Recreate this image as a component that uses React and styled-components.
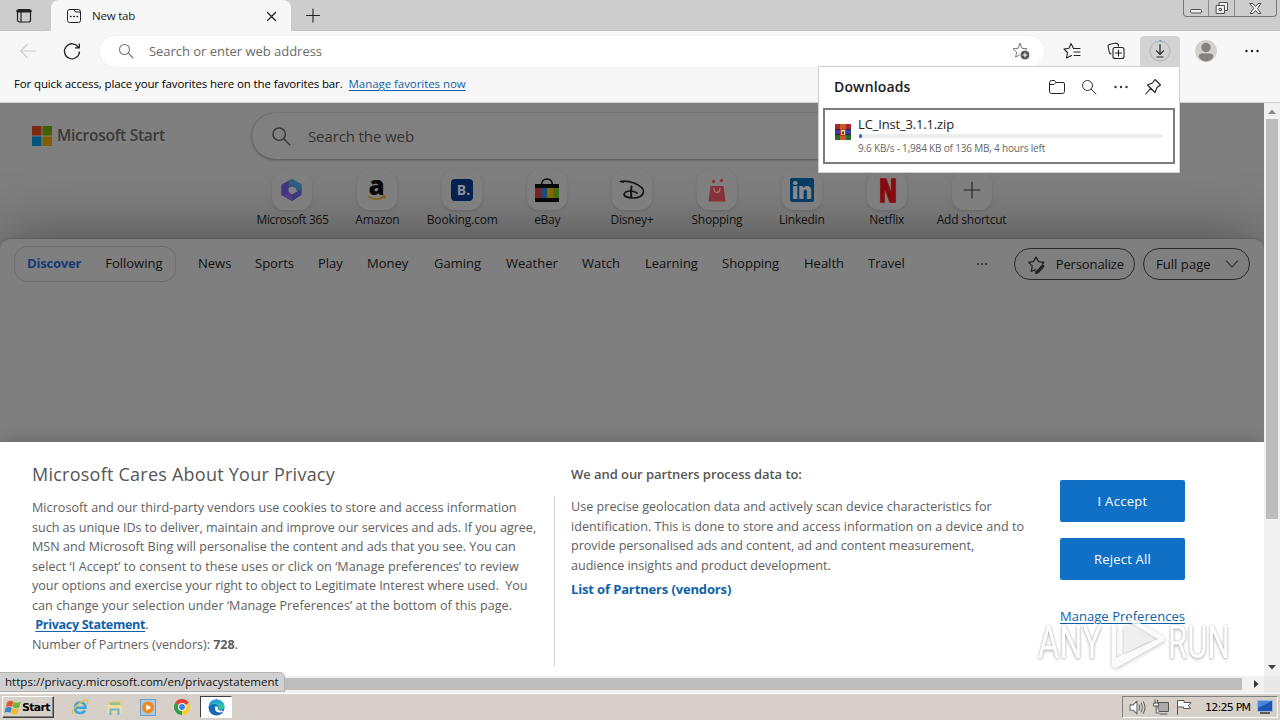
import React from 'react';
import styled, { createGlobalStyle } from 'styled-components';

const GlobalStyle = createGlobalStyle`
  * {
    box-sizing: border-box;
  }

  body {
    margin: 0;
    overflow: hidden;
    font-family: 'Open Sans', 'Noto Sans', sans-serif;
    background: #fff;
  }

  svg {
    display: block;
    flex: none;
    overflow: visible;
  }
`;

const Screen = styled.div`
  position: relative;
  display: flex;
  flex-direction: column;
  width: 1280px;
  height: 720px;
  overflow: hidden;
`;

const Text = styled.span`
  font-size: ${(p) => p.$size || 12}px;
  font-weight: ${(p) => p.$weight || 400};
  letter-spacing: ${(p) => p.$track || 0}px;
  line-height: 1;
  color: ${(p) => p.$color || '#1b1b1b'};
  white-space: pre;
`;

const LinkText = styled(Text)`
  color: ${(p) => p.$color || '#0f62a8'};
  text-decoration: underline;
  text-underline-offset: 2px;
  text-decoration-thickness: 1px;
`;

/* ---------- tab strip ---------- */

const TabStrip = styled.div`
  display: flex;
  height: 31px;
  background: #cdcdcd;
`;

const TabActions = styled.div`
  width: 51px;
  padding: 8px 0 0 16px;
  border-bottom: 1px solid #bdbdbd;
  border-bottom-right-radius: 7px;
`;

const Tab = styled.div`
  display: flex;
  align-items: center;
  width: 240px;
  padding: 1px 14px 0 15px;
  background: #f7f7f7;
  border-radius: 8px 8px 0 0;
`;

const TabTitle = styled(Text)`
  flex: 1;
  margin-left: 10px;
`;

const StripRest = styled.div`
  display: flex;
  flex: 1;
  justify-content: space-between;
  padding: 0 3px 0 14px;
  border-bottom: 1px solid #bdbdbd;
  border-bottom-left-radius: 7px;
`;

const NewTab = styled.div`
  padding-top: 8px;
`;

const WindowButtons = styled.div`
  display: flex;
  height: 17px;
  border: 1px solid #777;
  border-top: 0;
  border-radius: 0 0 4px 4px;
`;

const WindowButton = styled.div`
  display: flex;
  align-items: center;
  justify-content: center;
  width: ${(p) => p.$width}px;

  & + & {
    border-left: 1px solid #8a8a8a;
  }
`;

/* ---------- toolbar ---------- */

const Toolbar = styled.div`
  display: flex;
  align-items: center;
  height: 40px;
  padding: 0 18px 0 19px;
  background: #f7f7f7;
`;

const AddressBar = styled.div`
  display: flex;
  align-items: center;
  width: 944px;
  height: 31px;
  margin-left: 19px;
  padding: 0 14px 0 18px;
  border-radius: 16px;
  background: #fff;
  box-shadow: 0 0 2px #e4e4e4;
`;

const AddressText = styled(Text)`
  flex: 1;
  margin-left: 15px;
`;

const ToolButtons = styled.div`
  display: grid;
  grid-template-columns: 44px 33px 55px 49px 16px;
  align-items: center;
  margin-left: 19px;
`;

const DownloadButton = styled.div`
  display: flex;
  align-items: center;
  justify-content: center;
  width: 40px;
  height: 31px;
  border-radius: 4px 4px 0 0;
  background: #d3d3d3;
`;

const FavoritesBar = styled.div`
  display: flex;
  height: 32px;
  gap: 6px;
  padding: 7px 0 0 14px;
  background: #f7f7f7;
  border-bottom: 1px solid #cfcfcf;
`;

/* ---------- page ---------- */

const Viewport = styled.div`
  display: grid;
  grid-template: 573px 17px / 1264px 16px;
`;

const Page = styled.div`
  display: flex;
  flex-direction: column;
  overflow: hidden;
  background: #7f7f7f;
`;

const Hero = styled.div`
  display: grid;
  grid-template-columns: 220px 762px;
  height: 136px;
  padding: 10px 0 0 32px;
`;

const Brand = styled.div`
  display: flex;
  gap: 5px;
  height: 46px;
  align-items: center;
`;

const HeroMain = styled.div`
  display: flex;
  flex-direction: column;
`;

const WebSearch = styled.div`
  display: flex;
  align-items: center;
  gap: 17px;
  height: 46px;
  padding: 0 19px;
  border-radius: 24px;
  background: #808080;
  box-shadow: 0 1px 3px rgba(0, 0, 0, 0.3), 0 0 1px rgba(0, 0, 0, 0.35);
`;

const Shortcuts = styled.div`
  position: relative;
  z-index: 1;
  display: flex;
  margin: 11px 0 0 -2px;
`;

const Shortcut = styled.div`
  display: flex;
  flex-direction: column;
  align-items: center;
  gap: 4px;
  width: 85px;
`;

const Tile = styled.div`
  display: flex;
  align-items: center;
  justify-content: center;
  width: 40px;
  height: 40px;
  border-radius: 12px;
  background: #7f7f7f;
  box-shadow: 0 1px 3px rgba(0, 0, 0, 0.14);
`;

const Feed = styled.div`
  flex: 1;
  border-radius: 10px 10px 0 0;
  background: #7f7f7f;
  box-shadow: 0 0 64px rgba(0, 0, 0, 0.42), 0 -1px 1px rgba(0, 0, 0, 0.12);
`;

const FeedNav = styled.div`
  display: flex;
  align-items: center;
  height: 50px;
  padding: 0 14px;
`;

const FeedTabs = styled.div`
  display: flex;
  align-items: center;
  gap: 24px;
  width: 162px;
  height: 36px;
  padding: 0 12px 1px;
  border: 1px solid #6c6c6c;
  border-radius: 13px;
`;

const Topics = styled.div`
  display: flex;
  flex: 1;
  gap: 24px;
  margin-left: 22px;
  padding-bottom: 1px;
`;

const Topic = styled(Text)`
  width: ${(p) => p.$width}px;
`;

const PillButton = styled.div`
  display: flex;
  align-items: center;
  justify-content: space-between;
  width: ${(p) => p.$width}px;
  height: 32px;
  margin-left: ${(p) => p.$gap}px;
  padding: 0 10px 0 12px;
  border: 1px solid #2b2b2b;
  border-radius: 16px;
`;

/* ---------- privacy banner ---------- */

const Banner = styled.div`
  position: relative;
  display: grid;
  grid-template-columns: 523px 505px 125px;
  height: 234px;
  padding-left: 32px;
  background: #fff;
  box-shadow: 0 0 18px rgba(0, 0, 0, 0.22);
`;

const BannerColumn = styled.div`
  display: flex;
  flex-direction: column;
  align-items: flex-start;
`;

const BannerTitle = styled(Text)`
  height: ${(p) => p.$height}px;
  padding-top: ${(p) => p.$top}px;
  box-sizing: content-box;
`;

const Lines = styled.div`
  display: flex;
  flex-direction: column;
`;

const Line = styled(Text)`
  font-size: 12.6px;
  line-height: 19.55px;
  color: #5e5e5e;
`;

const Divided = styled.div`
  display: flex;
  width: 100%;
  height: 169px;
  padding-top: 1px;
  border-right: 1px solid #d0d0d0;
`;

const PartnerColumn = styled(BannerColumn)`
  padding-left: 16px;
`;

const PartnerLink = styled(Text)`
  margin-top: 8px;
`;

const BannerActions = styled.div`
  display: flex;
  flex-direction: column;
  gap: 16px;
  padding-top: 38px;
`;

const ActionButton = styled.div`
  display: flex;
  align-items: center;
  justify-content: center;
  height: 42px;
  border-radius: 2px;
  background: #1070c6;
`;

const ManageLink = styled(LinkText)`
  margin-top: 14px;
`;

/* ---------- scrollbars ---------- */

const VScroll = styled.div`
  display: flex;
  flex-direction: column;
  align-items: center;
  justify-content: space-between;
  padding: 6px 0 6px;
  background: #f1f1f1;
`;

const VThumb = styled.div`
  width: 12px;
  height: 400px;
  margin: 5px 0 auto;
  background: #bdbdbd;
`;

const HScroll = styled.div`
  display: flex;
  align-items: center;
  justify-content: space-between;
  padding: 0 5px 1px 0;
  background: #f1f1f1;
`;

const HThumb = styled.div`
  width: 1242px;
  height: 12px;
  background: #bdbdbd;
`;

const Corner = styled.div`
  background: #e8e8e8;
`;

const StatusBubble = styled.div`
  position: absolute;
  left: 0;
  top: 672px;
  width: 285px;
  height: 20px;
  padding: 3px 0 0 5px;
  border: 1px solid #b4b4b4;
  border-left: 0;
  border-radius: 0 5px 0 0;
  background: #d0d0d0;
  line-height: 12px;
  font-size: 12px;
`;

/* ---------- downloads flyout ---------- */

const Flyout = styled.div`
  position: absolute;
  z-index: 2;
  left: 818px;
  top: 66px;
  width: 362px;
  height: 107px;
  padding: 0 4px;
  border: 1px solid #cfcfcf;
  background: #fff;
`;

const FlyoutHead = styled.div`
  display: flex;
  align-items: center;
  height: 41px;
  gap: 16px;
  padding: 0 14px 2px 11px;
`;

const FlyoutTitle = styled(Text)`
  flex: 1;
`;

const DownloadItem = styled.div`
  display: flex;
  gap: 7px;
  height: 56px;
  padding: 8px 10px 0;
  border: 2px solid #7d7d7d;
`;

const DownloadIcon = styled.div`
  padding-top: 6px;
`;

const DownloadInfo = styled.div`
  display: flex;
  flex: 1;
  flex-direction: column;
`;

const Track = styled.div`
  height: 4px;
  margin: 3px 0 5px 1px;
  border-radius: 2px;
  background: #ededed;
`;

const Progress = styled.div`
  width: 3px;
  height: 4px;
  border-radius: 2px;
  background: #2a62c8;
`;

/* ---------- taskbar ---------- */

const Taskbar = styled.div`
  display: flex;
  align-items: center;
  flex: 1;
  padding: 0 2px;
  border-top: 1px solid #fff;
  background: #d6d0c8;
`;

const StartButton = styled.div`
  display: flex;
  align-items: center;
  gap: 1px;
  width: 52px;
  height: 22px;
  padding-left: 2px;
  border: 1px solid;
  border-color: #fff #404040 #404040 #fff;
  box-shadow: inset -1px -1px #808080;
`;

const StartLabel = styled(Text)`
  font-family: 'DejaVu Sans', sans-serif;
`;

const QuickLaunch = styled.div`
  display: flex;
  flex: 1;
  align-items: center;
  gap: 17px;
  padding-left: 17px;
`;

const ActiveTask = styled.div`
  display: flex;
  align-items: center;
  justify-content: center;
  width: 32px;
  height: 22px;
  margin-left: -7px;
  border: 1px solid;
  border-color: #404040 #fff #fff #404040;
  background: #fff;
`;

const Tray = styled.div`
  display: flex;
  align-items: center;
  gap: 7px;
  width: 156px;
  height: 22px;
  padding-left: 6px;
  border: 1px solid;
  border-color: #808080 #fff #fff #808080;
`;

const Clock = styled(Text)`
  margin-left: 6px;
  font-family: 'DejaVu Sans', sans-serif;
`;

/* ---------- watermark ---------- */

const Watermark = styled.div`
  position: absolute;
  z-index: 3;
  left: 1038px;
  top: 612px;
  display: flex;
  align-items: center;
  width: 196px;
  height: 60px;
  opacity: 0.9;
`;

const MarkWord = styled.span`
  display: block;
  width: 66px;
  font: 400 46px/46px 'Roboto', sans-serif;
  color: #fff;
  transform: scaleX(${(p) => p.$scale});
  transform-origin: 0 50%;
  text-shadow: 0 0 3px rgba(0, 0, 0, 0.32), 0 2px 4px rgba(0, 0, 0, 0.2);
`;

const MarkLogo = styled.svg`
  filter: drop-shadow(0 1px 2px rgba(0, 0, 0, 0.3));
`;

/* ---------- drawings ---------- */

const Icon = ({ size = 16, box = 16, width = 1, color = '#222', children }) => (
  <svg
    width={size}
    height={size}
    viewBox={`0 0 ${box} ${box}`}
    fill="none"
    stroke={color}
    strokeWidth={width}
    strokeLinecap="round"
    strokeLinejoin="round"
  >
    {children}
  </svg>
);

const SearchIcon = ({ size = 16, color = '#555', width = 1.1 }) => (
  <Icon size={size} color={color} width={width}>
    <circle cx="6.5" cy="6.5" r="5" />
    <path d="M10.2 10.2 L15 15" />
  </Icon>
);

const Dots = ({ color = '#222', size = 16 }) => (
  <Icon size={size} color="none">
    <g fill={color}>
      <circle cx="2.5" cy="8" r="1.2" />
      <circle cx="8" cy="8" r="1.2" />
      <circle cx="13.5" cy="8" r="1.2" />
    </g>
  </Icon>
);

const Star = 'M7 0.5 L9 5.3 L14 5.8 L10.3 9.2 L11.4 14.2 L7 11.6 L2.6 14.2 L3.7 9.2 L0 5.8 L5 5.3 Z';

const TabActionsIcon = () => (
  <Icon width={1.2}>
    <rect x="1.5" y="1.5" width="13" height="12.5" rx="2" />
    <path d="M1.7 3 H14.3" strokeWidth="3" />
    <path d="M5 4 V14" />
  </Icon>
);

const PageIcon = () => (
  <Icon>
    <path d="M3.5 1.5 H8 L9.5 4 H14.5 V12.5 Q14.5 14.5 12.5 14.5 H3.5 Q1.5 14.5 1.5 12.5 V3.5 Q1.5 1.5 3.5 1.5 Z M8 1.5 H12.5 Q14.5 1.5 14.5 4" />
    <path d="M4.5 8.5 H5 M7.7 8.5 H8.3 M11 8.5 H11.5" strokeWidth="1.5" />
  </Icon>
);

const M365Logo = () => (
  <svg width="24" height="24" viewBox="0 0 24 24">
    <path d="M12 1 L21.5 6.5 V12 L15 9.5 L9 12 V16 L3 18 L1.5 17 V6.5 Z" fill="#38457c" />
    <path d="M12 1 L21.5 6.5 V15 L16 12 V9 L12 7 L8 9 L6 5 Z" fill="#2c5f7c" />
    <path d="M1.5 7 L9 3 L8.5 15 L3 18 L1.5 17 Z" fill="#443580" />
    <path d="M2.5 17.5 L9 14 L12 16.5 L16 14 L21.5 11 V17 L12 23 Z" fill="#3a3a80" />
    <path d="M2.5 17.5 L9 14 L12 16.5 V23 Z" fill="#513a80" />
    <path d="M12 8.5 L15.500 10 V14 L12 16 L8.500 14 V10 Z" fill="#828088" />
  </svg>
);

const AmazonLogo = () => (
  <svg width="26" height="28" viewBox="0 0 26 28">
    <text x="12.500" y="18.500" textAnchor="middle" fontFamily="Open Sans" fontWeight="800" fontSize="26" fill="#070707">
      a
    </text>
    <path d="M4 20.500 Q12 25.500 20 21 M18 20 L21 19.800 L20.500 22.500" stroke="#80621d" strokeWidth="1.600" fill="none" />
  </svg>
);

const BookingLogo = () => (
  <svg width="22" height="22" viewBox="0 0 22 22">
    <rect width="22" height="22" rx="4" fill="#06204f" />
    <text x="12.500" y="16" textAnchor="middle" fontFamily="Open Sans" fontWeight="700" fontSize="14" fill="#8c8f96">
      B.
    </text>
  </svg>
);

const EbayLogo = () => (
  <svg width="24" height="26" viewBox="0 0 24 26">
    <path d="M6.500 8 Q7 2 12 2 Q17 2 17.500 8" fill="none" stroke="#080808" strokeWidth="1.500" />
    <rect y="7" width="24" height="18" fill="#080808" />
    <rect y="11" width="6" height="10" fill="#782325" />
    <rect x="6" y="11" width="6" height="10" fill="#164b7c" />
    <rect x="12" y="11" width="6" height="10" fill="#836900" />
    <rect x="18" y="11" width="6" height="10" fill="#446c14" />
  </svg>
);

const DisneyLogo = () => (
  <svg width="26" height="24" viewBox="0 0 26 24" fill="none" stroke="#161616" strokeLinecap="round">
    <path d="M1.500 3.500 Q8 2.500 15 5 Q25 9 24.500 14 Q23.500 20 14 20 Q5.500 19.500 5 16.500 Q6 13 11 13 Q15 13 18 15" strokeWidth="1.700" />
    <path d="M1.500 3.500 L4.500 4.500" strokeWidth="1" />
    <path d="M12.500 8.500 Q11.500 13 12.300 19" strokeWidth="2" />
  </svg>
);

const ShoppingLogo = () => (
  <svg width="20" height="24" viewBox="0 0 20 24">
    <path d="M3.500 8 H16.500 L18.500 23.500 H1.500 Z" fill="#873238" />
    <path d="M7 10 Q7 14.500 10 14.500 Q13 14.500 13 10" fill="none" stroke="#a16f72" strokeWidth="1.400" />
    <circle cx="6.500" cy="3.500" r="1.700" fill="#873238" />
    <circle cx="14.500" cy="2.500" r="1.700" fill="#873238" />
  </svg>
);

const LinkedinLogo = () => (
  <svg width="24" height="24" viewBox="0 0 24 24">
    <rect width="24" height="24" rx="2" fill="#053c63" />
    <text x="11.500" y="20.500" textAnchor="middle" fontFamily="Open Sans" fontWeight="800" fontSize="22" letterSpacing="-1" fill="#868a8e">
      in
    </text>
  </svg>
);

const NetflixLogo = () => (
  <svg width="22" height="26" viewBox="0 0 22 26">
    <text
      x="3"
      y="24.500"
      fontFamily="Open Sans"
      fontWeight="800"
      fontSize="32"
      textLength="18"
      lengthAdjust="spacingAndGlyphs"
      fill="#850a10"
      stroke="#850a10"
      strokeWidth="1.500"
    >
      N
    </text>
  </svg>
);

const PlusLogo = () => (
  <Icon size={18} color="#222">
    <path d="M1 8 H15 M8 1 V15" />
  </Icon>
);

const MicrosoftLogo = () => (
  <svg width="20" height="20" viewBox="0 0 20 20">
    <rect width="9.500" height="9.500" fill="#7c2812" />
    <rect x="10.500" width="9.500" height="9.500" fill="#3f5f00" />
    <rect y="10.500" width="9.500" height="9.500" fill="#005379" />
    <rect x="10.500" y="10.500" width="9.500" height="9.500" fill="#805d00" />
  </svg>
);

const ArchiveIcon = () => (
  <svg width="16" height="16" viewBox="0 0 16 16">
    <rect width="16" height="5.500" fill="#a8262e" />
    <rect y="5.500" width="16" height="5" fill="#3a3f9c" />
    <rect y="10.500" width="16" height="5.500" fill="#2a6a2f" />
    <path d="M0 5.500 H16 M0 10.500 H16" stroke="#30202a" />
    <rect x="5" width="6" height="16" fill="#c05e26" />
    <rect x="5" y="5" width="6" height="7" fill="#c9322a" />
    <rect x="6" y="6" width="4" height="5" fill="#ead9b5" />
    <rect x="7" y="7.500" width="2" height="3" fill="#7e3b1c" />
  </svg>
);

const WindowsFlag = () => (
  <svg width="16" height="16" viewBox="0 0 15 15">
    <path d="M2 3 Q5 0.500 7.800 2.500 L6.700 7.300 Q4 6 0.800 7.500 Z" fill="#e0592a" />
    <path d="M8.200 2.800 Q11 4.500 15 2 L13.300 8 Q10 9.500 7.100 7.600 Z" fill="#6fb43a" />
    <path d="M0.600 8.200 Q4 6.700 6.400 8.200 L5.200 13 Q2.500 11.500 -0.500 13 Z" fill="#3d82cf" />
    <path d="M6.900 8.500 Q10 10.300 13 9 L11.600 13.800 Q8.500 15.300 5.700 13.400 Z" fill="#f2bd26" />
  </svg>
);

const ExplorerE = () => (
  <svg width="18" height="18" viewBox="0 0 18 18" fill="none">
    <path d="M4.500 9.700 H14.500 Q14.500 4.500 9.300 4.500 Q4 4.500 4 9.800 Q4 15 9.300 15 Q12.500 15 14 12.500" stroke="#39a5dd" strokeWidth="2.600" />
    <path d="M2 16 Q0 12 7 6.500 Q14 1 16.500 2.300 Q17.500 3.500 15.800 6" stroke="#ecc044" strokeWidth="1.400" />
  </svg>
);

const FolderTask = () => (
  <svg width="17" height="18" viewBox="0 0 17 18">
    <path d="M1.500 4 H6 L7 2.500 H15 V15 H1.500 Z" fill="#e7cd75" />
    <rect x="4" y="4.500" width="10" height="4" fill="#8fc0a0" />
    <rect x="1" y="7" width="15" height="8" fill="#f1df98" />
    <path d="M4.500 17 V11.500 H12.500 V17" fill="none" stroke="#6eb2dc" strokeWidth="2" />
  </svg>
);

const PlayerTask = () => (
  <svg width="17" height="17" viewBox="0 0 17 17">
    <rect x="0.500" y="0.500" width="15" height="16" fill="#a9cbe8" stroke="#6c9cc8" />
    <circle cx="8" cy="8.500" r="6" fill="#f08a1d" />
    <path d="M6.300 5.200 L11.300 8.500 L6.300 11.800 Z" fill="#fff" />
  </svg>
);

const ChromeTask = () => (
  <svg width="16" height="16" viewBox="0 0 16 16">
    <path d="M8 8 L1.070 4 A8 8 0 0 1 14.930 4 Z" fill="#de4236" />
    <path d="M8 8 L14.930 4 A8 8 0 0 1 8 16 Z" fill="#f9cc32" />
    <path d="M8 8 L8 16 A8 8 0 0 1 1.070 4 Z" fill="#2f9e4c" />
    <circle cx="8" cy="8" r="4" fill="#fff" />
    <circle cx="8" cy="8" r="3" fill="#3f7ee8" />
  </svg>
);

const EdgeTask = () => (
  <svg width="17" height="17" viewBox="0 0 17 17">
    <circle cx="8.500" cy="8.500" r="8" fill="#1668b8" />
    <path d="M0.700 8 Q1.500 0.500 8.800 0.500 Q16 1 16.500 7.500 Q16 11 12 11 Q9.500 10.500 10.500 8.500 Q10.500 5.500 7 5 Q2.500 5 0.700 8 Z" fill="#32bfa8" />
    <path d="M0.700 8 Q1.500 1.500 8 0.600 Q13 1 13.500 6 Q11 3.500 7 4 Q2.500 4.500 0.700 8 Z" fill="#2a9fdc" />
    <path d="M7.500 7 Q5.500 12.500 11 13.500 Q14 13.800 16 11.700 Q15 11.800 12 11.500 Q9 11 10 8 Z" fill="#fff" />
  </svg>
);

const shortcuts = [
  ['Microsoft 365', <M365Logo />, -0.36],
  ['Amazon', <AmazonLogo />, -0.26],
  ['Booking.com', <BookingLogo />, -0.15],
  ['eBay', <EbayLogo />, -0.3],
  ['Disney+', <DisneyLogo />, -0.2],
  ['Shopping', <ShoppingLogo />, -0.25],
  ['Linkedin', <LinkedinLogo />, -0.25],
  ['Netflix', <NetflixLogo />, -0.2],
  ['Add shortcut', <PlusLogo />, -0.22],
];

const topics = [
  ['News', 33],
  ['Sports', 39],
  ['Play', 25],
  ['Money', 43],
  ['Gaming', 48],
  ['Weather', 52],
  ['Watch', 39],
  ['Learning', 53],
  ['Shopping', 58],
  ['Health', 40],
  ['Travel', 36],
];

const privacyLines = [
  ['Microsoft and our third-party vendors use cookies to store and access information', 0.03],
  ['such as unique IDs to deliver, maintain and improve our services and ads. If you agree,', -0.03],
  ['MSN and Microsoft Bing will personalise the content and ads that you see. You can', 0],
  ['select ‘I Accept’ to consent to these uses or click on ‘Manage preferences’ to review', 0.06],
  ['your options and exercise your right to object to Legitimate Interest where used.\u00a0 You', -0.05],
  ['can change your selection under ‘Manage Preferences’ at the bottom of this page.', 0.03],
];

const partnerLines = [
  ['Use precise geolocation data and actively scan device characteristics for', 0.01],
  ['identification. This is done to store and access information on a device and to', 0.01],
  ['provide personalised ads and content, ad and content measurement,', -0.04],
  ['audience insights and product development.', -0.04],
];

const DownloadsFlyout = () => (
  <Flyout>
    <FlyoutHead>
      <FlyoutTitle $size={14} $weight={600} $track={0.15}>Downloads</FlyoutTitle>
      <Icon>
        <path d="M0.500 3.500 Q0.500 1.500 2.500 1.500 H5.500 L7 3.500 H14 Q15.500 3.500 15.500 5 V12.500 Q15.500 14.500 13.500 14.500 H2.500 Q0.500 14.500 0.500 12.500 Z M0.500 5.500 H5 L7 3.500" />
      </Icon>
      <SearchIcon color="#333" width={1} />
      <Dots color="#333" />
      <Icon width={1.1}>
        <path d="M10 0.500 L15.500 6 L12 8.500 L10 13.500 L2.500 6 L7.500 4 Z M5.500 9.500 L0.800 15" />
      </Icon>
    </FlyoutHead>
    <DownloadItem>
      <DownloadIcon><ArchiveIcon /></DownloadIcon>
      <DownloadInfo>
        <Text $size={13} $track={-0.16} $color="#222">LC_Inst_3.1.1.zip</Text>
        <Track><Progress /></Track>
        <Text $size={10} $track={-0.18} $color="#666">9.6 KB/s - 1,984 KB of 136 MB, 4 hours left</Text>
      </DownloadInfo>
    </DownloadItem>
  </Flyout>
);

const PrivacyBanner = () => (
  <Banner>
    <BannerColumn>
      <BannerTitle $size={18} $weight={500} $track={0.24} $color="#555" $top={23} $height={32}>
        Microsoft Cares About Your Privacy
      </BannerTitle>
      <Divided>
        <Lines>
          {privacyLines.map(([text, track]) => (
            <Line key={text} $track={track}>{text}</Line>
          ))}
          <Line>
            {' '}
            <LinkText $size={12.6} $weight={700} $track={-0.34}>Privacy Statement</LinkText>.
          </Line>
          <Line $track={-0.03}>
            Number of Partners (vendors): <b>728</b>.
          </Line>
        </Lines>
      </Divided>
    </BannerColumn>
    <PartnerColumn>
      <BannerTitle $size={13} $weight={600} $track={-0.06} $color="#555" $top={26} $height={29}>
        We and our partners process data to:
      </BannerTitle>
      <Lines>
        {partnerLines.map(([text, track]) => (
          <Line key={text} $track={track}>{text}</Line>
        ))}
      </Lines>
      <PartnerLink $size={13} $weight={700} $track={-0.14} $color="#0f62a8">List of Partners (vendors)</PartnerLink>
    </PartnerColumn>
    <BannerActions>
      <ActionButton><Text $size={13} $track={0.3} $color="#fff">I Accept</Text></ActionButton>
      <ActionButton><Text $size={13} $track={0.21} $color="#fff">Reject All</Text></ActionButton>
      <ManageLink $size={13} $track={0.04}>Manage Preferences</ManageLink>
    </BannerActions>
  </Banner>
);

const App = () => (
  <Screen>
    <GlobalStyle />
    <TabStrip>
      <TabActions><TabActionsIcon /></TabActions>
      <Tab>
        <PageIcon />
        <TabTitle $size={11.5} $track={-0.2}>New tab</TabTitle>
        <Icon size={11} box={11} width={1.3}>
          <path d="M1.500 1.500 L9.500 9.500 M9.500 1.500 L1.500 9.500" />
        </Icon>
      </Tab>
      <StripRest>
        <NewTab>
          <Icon width={1.1}>
            <path d="M1.500 7.500 H14.500 M8 1 V14" />
          </Icon>
        </NewTab>
        <WindowButtons>
          <WindowButton $width={24}>
            <Icon color="#555"><rect x="2.500" y="9.500" width="11" height="3.500" rx="1" fill="#eee" /></Icon>
          </WindowButton>
          <WindowButton $width={26}>
            <Icon size={14} box={14} color="#555">
              <rect x="4.500" y="1.500" width="8" height="8" fill="#eee" />
              <rect x="1.500" y="4.500" width="8" height="8" fill="#eee" />
              <rect x="4.500" y="7.500" width="2" height="2" />
            </Icon>
          </WindowButton>
          <WindowButton $width={42}>
            <Icon size={13} box={13} color="#555">
              <path d="M1 1.500 H4 L6.500 4.500 L9 1.500 H12 L8.500 6.500 L12 11.500 H9 L6.500 8.500 L4 11.500 H1 L4.500 6.500 Z" fill="#eee" />
            </Icon>
          </WindowButton>
        </WindowButtons>
      </StripRest>
    </TabStrip>

    <Toolbar>
      <Icon size={18} color="#ccc">
        <path d="M15 8 H1.500 M7.500 2 L1.500 8 L7.500 14" />
      </Icon>
      <svg width="44" height="18" viewBox="0 0 44 18" fill="none" stroke="#222" strokeWidth="1.300">
        <path d="M41.500 5.500 A7.500 7.500 0 1 0 42.500 9.500 M42.300 1.500 V5.800 H38" />
      </svg>
      <AddressBar>
        <SearchIcon size={16} color="#777" />
        <AddressText $size={13} $track={-0.03} $color="#6a6a6a">Search or enter web address</AddressText>
        <Icon size={18} box={18} color="#777">
          <path d={Star} transform="translate(1 1)" />
          <circle cx="13" cy="13" r="5" fill="#555" stroke="#fff" />
          <path d="M11 13 H15 M13 11 V15" stroke="#fff" />
        </Icon>
      </AddressBar>
      <ToolButtons>
        <Icon size={18} box={18} width={1.1}>
          <path d="M10.500 6.500 L8 1.500 L6 6.300 L1 7 L4.500 10.500 L3.500 16 L8.500 13.500 M11 6.500 H17 M11 10 H17 M11 13.500 H17" />
        </Icon>
        <Icon size={18} box={18} width={1.1}>
          <path d="M4 12 L2.500 11 L1 4 L2 2.500 L9 1 L11 2 L11.500 4" />
          <rect x="6" y="5.500" width="11" height="11" rx="2" />
          <path d="M8.500 11 H14.500 M11.500 8 V14" />
        </Icon>
        <DownloadButton>
          <Icon size={22} box={22} width={1.2}>
            <circle cx="11" cy="11" r="10" stroke="#bdbdbd" strokeWidth="1.500" />
            <path d="M11 4.500 V14 M7.500 10.800 L11 14.300 L14.500 10.800 M8 17 H14" />
            <path d="M11 0.800 H11.500" stroke="#2a62c8" />
          </Icon>
        </DownloadButton>
        <svg width="22" height="22" viewBox="0 0 22 22">
          <circle cx="11" cy="11" r="11" fill="#d3d0cd" />
          <circle cx="11" cy="7.500" r="4.700" fill="#85817e" />
          <path d="M3.500 16.500 Q4 13.500 7 13.500 H15 Q18 13.500 18.500 16.500 Q16 21 11 21.500 Q6 21 3.500 16.500 Z" fill="#85817e" />
        </svg>
        <Dots />
      </ToolButtons>
    </Toolbar>

    <FavoritesBar>
      <Text $size={11.5} $track={-0.13} $color="#000">For quick access, place your favorites here on the favorites bar.</Text>
      <LinkText $size={11.5} $track={-0.06}>Manage favorites now</LinkText>
    </FavoritesBar>

    <Viewport>
      <Page>
        <Hero>
          <Brand>
            <MicrosoftLogo />
            <Text $size={15.5} $weight={600} $track={-0.25} $color="#3a3a3a">Microsoft Start</Text>
          </Brand>
          <HeroMain>
            <WebSearch>
              <SearchIcon size={20} color="#333" />
              <Text $size={15} $track={-0.11} $color="#333">Search the web</Text>
            </WebSearch>
            <Shortcuts>
              {shortcuts.map(([label, logo, track]) => (
                <Shortcut key={label}>
                  <Tile>{logo}</Tile>
                  <Text $track={track} $color="#111">{label}</Text>
                </Shortcut>
              ))}
            </Shortcuts>
          </HeroMain>
        </Hero>
        <Feed>
          <FeedNav>
            <FeedTabs>
              <Text $size={13} $weight={700} $track={-0.2} $color="#153a78">Discover</Text>
              <Text $size={13} $color="#111">Following</Text>
            </FeedTabs>
            <Topics>
              {topics.map(([label, width]) => (
                <Topic key={label} $size={13} $width={width} $color="#111">{label}</Topic>
              ))}
            </Topics>
            <Dots size={12} />
            <PillButton $width={121} $gap={26}>
              <Icon size={19} box={18} width={1.2}>
                <path d="M8 14 L4 15.500 L5 10.500 L1.500 7 L6 6.300 L8.500 2 L11 6.300 L16 7 L14.500 8.500" />
                <path d="M15 10.500 L10.500 15.500 L9 16.500" strokeWidth="3" />
              </Icon>
              <Text $size={13} $track={-0.12} $color="#111">Personalize</Text>
            </PillButton>
            <PillButton $width={107} $gap={8}>
              <Text $size={13} $track={0.05} $color="#111">Full page</Text>
              <Icon size={14} color="#333" width={1.3}>
                <path d="M1.500 4.500 L8 11.500 L14.500 4.500" />
              </Icon>
            </PillButton>
          </FeedNav>
        </Feed>
        <PrivacyBanner />
      </Page>
      <VScroll>
        <svg width="8" height="5" viewBox="0 0 8 5"><path d="M0 5 L4 0.500 L8 5 Z" fill="#8a8a8a" /></svg>
        <VThumb />
        <svg width="8" height="5" viewBox="0 0 8 5"><path d="M0 0 L4 4.500 L8 0 Z" fill="#444" /></svg>
      </VScroll>
      <HScroll>
        <HThumb />
        <svg width="5" height="8" viewBox="0 0 5 8"><path d="M0 0 L4.500 4 L0 8 Z" fill="#333" /></svg>
      </HScroll>
      <Corner />
    </Viewport>

    <Taskbar>
      <StartButton>
        <WindowsFlag />
        <StartLabel $size={11} $weight={700} $track={-0.7} $color="#000">Start</StartLabel>
      </StartButton>
      <QuickLaunch>
        <ExplorerE />
        <FolderTask />
        <PlayerTask />
        <ChromeTask />
        <ActiveTask><EdgeTask /></ActiveTask>
      </QuickLaunch>
      <Tray>
        <Icon size={17} color="#666">
          <path d="M1 5.500 H4 L7.500 2 V14 L4 10.500 H1 Z" fill="#fff" />
          <path d="M9.500 5.500 Q11 8 9.500 10.500 M11.500 4 Q13.500 8 11.500 12 M13.500 2.500 Q16.500 8 13.500 13.500" />
        </Icon>
        <Icon size={16} color="#555">
          <rect x="5.500" y="3.500" width="10" height="9" fill="#aaa" />
          <path d="M2 1 V4 M4.500 1 V4 M1 4 H5.500 V7 H1 Z M3.200 7 V14 H6 M7 15 H14" fill="#fff" />
        </Icon>
        <Icon size={16} color="#555">
          <path d="M1.500 15.500 V1.500 H8 V3.500 H15 L12.500 6.500 L14.500 9.500 H7.500 V8 H1.500" fill="#fff" />
        </Icon>
        <Clock $size={11} $track={-0.75} $color="#000">12:25 PM</Clock>
        <svg width="17" height="14" viewBox="0 0 17 14">
          <rect x="0.500" y="0.500" width="15" height="11" fill="#1c55b4" stroke="#9fb5d6" />
          <path d="M1 1 H15 L1 8 Z" fill="#4a87da" />
          <path d="M3 13 H13" stroke="#333" strokeWidth="1.500" />
        </svg>
      </Tray>
    </Taskbar>

    <StatusBubble>
      <Text $size={11.5} $track={0.03} $color="#111">https://privacy.microsoft.com/en/privacystatement</Text>
    </StatusBubble>
    <DownloadsFlyout />
    <Watermark>
      <MarkWord $scale={0.71}>ANY</MarkWord>
      <MarkLogo width="64" height="60" viewBox="0 0 64 60" fill="#fff">
        <path d="M8 12 H12 V46 L54 27 L24 9 V4 L60 25 V29 L12 56 L8 54 Z" opacity="0.9" />
        <path d="M20 14 L48 28 L20 42 Z" fill="#eee" />
      </MarkLogo>
      <MarkWord $scale={0.68}>RUN</MarkWord>
    </Watermark>
  </Screen>
);

export default App;
